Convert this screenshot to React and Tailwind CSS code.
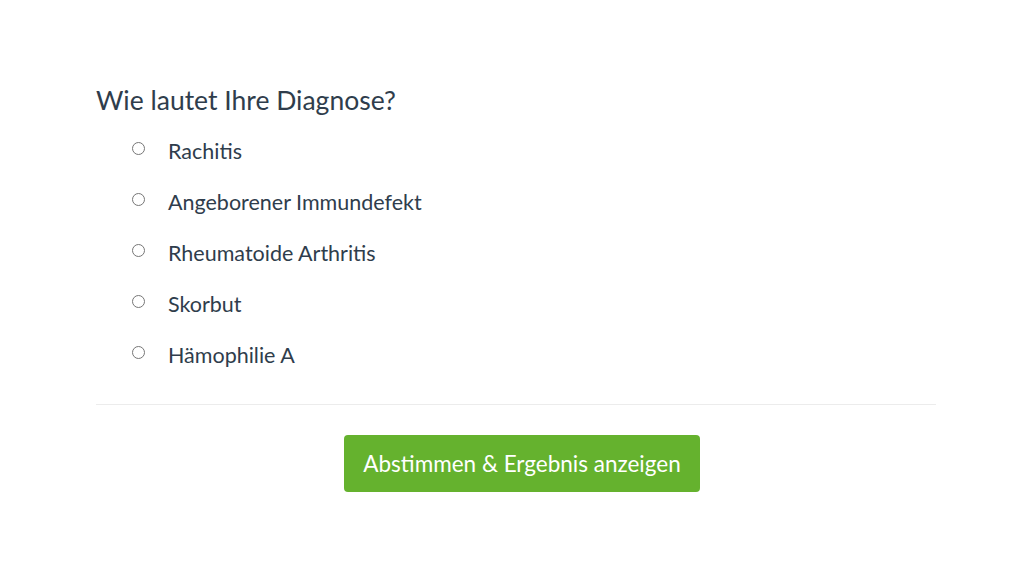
import { useState } from "react";

const options = [
  "Rachitis",
  "Angeborener Immundefekt",
  "Rheumatoide Arthritis",
  "Skorbut",
  "Hämophilie A",
];

export default function App() {
  const [choice, setChoice] = useState(null);

  return (
    <div className="min-h-screen w-full bg-white font-['Lato','Liberation_Sans',sans-serif] text-[#2f3d4c]">
      <div className="ml-[96px] w-[840px] pt-[82px]">
        <h2 className="text-[26.5px] leading-[36px]">Wie lautet Ihre Diagnose?</h2>

        {/* answers */}
        <div className="mt-[8px] flex flex-col">
          {options.map((opt, i) => (
            <label key={opt} className="flex h-[51px] items-center">
              <span className="flex w-[72px] justify-end pr-[23px]">
                <input
                  type="radio"
                  name="diagnose"
                  checked={choice === i}
                  onChange={() => setChoice(i)}
                  className="h-[13px] w-[13px] -translate-y-[3px]"
                />
              </span>
              <span className="text-[21.5px]">{opt}</span>
            </label>
          ))}
        </div>

        <div className="mt-[23px] border-t border-[#ececec]" />

        <div className="flex justify-center pl-[12px] pt-[30px]">
          <button className="h-[57px] w-[356px] rounded-[4px] bg-[#65b22e] text-[22.5px] text-white">
            Abstimmen &amp; Ergebnis anzeigen
          </button>
        </div>
      </div>
    </div>
  );
}
